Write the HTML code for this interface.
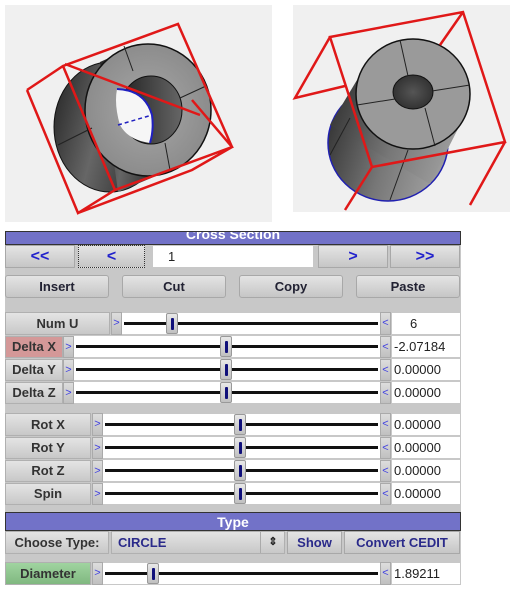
<!DOCTYPE html><html><head><style>
body{margin:0;width:515px;height:597px;background:#fff;position:relative;overflow:hidden;font-family:"Liberation Sans",Arial,sans-serif;}
.a{position:absolute;box-sizing:border-box}
.btn{position:absolute;box-sizing:border-box;background:linear-gradient(#e4e4e4,#c6c6c6);border:1px solid #a8a8a8;border-radius:3px;font-weight:bold;font-size:13px;color:#222;text-align:center}
.lbl{position:absolute;box-sizing:border-box;background:linear-gradient(#e4e4e4,#c8c8c8);border:1px solid #b0b0b0;font-weight:bold;font-size:13px;color:#333;text-align:center}
.gt{position:absolute;box-sizing:border-box;width:11px;background:linear-gradient(#ddd,#c0c0c0);border:1px solid #aaa;color:#4040e0;font-size:11px;text-align:center}
.tr{position:absolute;background:#fff}
.tr i{position:absolute;left:2px;right:2px;top:9px;height:3px;background:#111}
.th{position:absolute;width:12px;top:0;height:21px;background:linear-gradient(#e8e8e8,#c0c0c0);border:1px solid #999;border-radius:2px;box-sizing:border-box}
.th b{position:absolute;left:4px;top:4px;width:3px;height:12px;background:#10107a;border-radius:1px}
.val{position:absolute;background:#fff;font-size:13px;color:#222;padding-left:2px;box-sizing:border-box}
.bar{position:absolute;background:#7272c8;border:1px solid #333;color:#fff;font-weight:bold;font-size:14px;text-align:center;box-sizing:border-box;overflow:hidden}
</style></head><body>
<div class="a" style="left:5px;top:5px;width:267px;height:217px;background:#f0f0f0"></div>
<svg class="a" style="left:0;top:0" width="280" height="230">
<defs><linearGradient id="g1" x1="0" x2="1" y1="0" y2="0.3"><stop offset="0" stop-color="#222"/><stop offset=".5" stop-color="#666"/><stop offset="1" stop-color="#2a2a2a"/></linearGradient>
<radialGradient id="g2"><stop offset="0" stop-color="#a8a8a8"/><stop offset="1" stop-color="#8c8c8c"/></radialGradient>
<linearGradient id="gh" x1="0" x2="1"><stop offset="0" stop-color="#222"/><stop offset="1" stop-color="#666"/></linearGradient></defs>
<ellipse cx="110" cy="127" rx="56" ry="65" fill="url(#g1)" stroke="#111"/>
<polygon points="100,62 140,44 170,170 118,192" fill="url(#g1)"/>
<ellipse cx="148" cy="110" rx="63" ry="66" fill="url(#g2)" stroke="#111" stroke-width="1.5"/>
<ellipse cx="151" cy="110" rx="31" ry="34" fill="url(#gh)" stroke="#111"/>
<path d="M117 89 Q145 90 152 115 Q154 130 150 143 Q128 140 120 125 Q114 105 117 89 Z" fill="#f6f6f6"/>
<path d="M117 89 Q145 90 152 115 Q154 130 150 143" fill="none" stroke="#2020c0" stroke-width="2"/>
<path d="M118 125 L152 115" stroke="#2020c0" stroke-dasharray="4,3" stroke-width="1.5"/>
<path d="M124 46 L133 71 M165 143 L170 170 M180 98 L206 86 M58 145 L92 128" stroke="#222"/>
<path d="M27 90 L63 66 L178 24 L232 147 L115 190 L78 213 L27 90 M63 66 L115 190 M178 24 L232 147 M65 64 L200 115 M192 100 L232 147 L192 170 L78 213" fill="none" stroke="#e01818" stroke-width="2.5"/>
</svg>
<div class="a" style="left:293px;top:5px;width:217px;height:207px;background:#f0f0f0"></div>
<svg class="a" style="left:280px;top:0" width="235" height="230">
<defs><linearGradient id="g3" x1="0" x2="1" y1="0" y2="0.3"><stop offset="0" stop-color="#2a2a2a"/><stop offset=".6" stop-color="#777"/><stop offset="1" stop-color="#9a9a9a"/></linearGradient>
<radialGradient id="g4"><stop offset="0" stop-color="#555"/><stop offset="1" stop-color="#333"/></radialGradient></defs>
<ellipse cx="108" cy="143" rx="60" ry="58" fill="url(#g3)" stroke="#2020b0" stroke-width="1.5"/>
<polygon points="80,75 185,115 150,184 50,125" fill="url(#g3)"/>
<ellipse cx="133" cy="94" rx="57" ry="55" fill="#9a9a9a" stroke="#111" stroke-width="1.5"/>
<ellipse cx="133" cy="92" rx="20" ry="17" fill="url(#g4)" stroke="#111"/>
<path d="M120 40 L128 76 M145 108 L155 146 M77 105 L115 99 M152 91 L190 85 M50 155 L70 118 M110 200 L128 150" stroke="#222"/>
<path d="M50 37 L183 12 L225 142 L92 167 Z M50 37 L15 98 L65 86 M183 12 L160 45 M225 142 L190 205 M92 167 L65 210" fill="none" stroke="#e01818" stroke-width="2.5"/>
</svg>
<div class="a" style="left:5px;top:235px;width:456px;height:350px;background:#c8c8c8"></div>
<div class="bar" style="left:5px;top:231px;width:456px;height:14px;line-height:4px">Cross Section</div>
<div class="btn" style="left:5px;top:245px;width:70px;height:23px;color:#2222cc;font-size:16px;line-height:21px;border-radius:0">&lt;&lt;</div>
<div class="btn" style="left:78px;top:245px;width:67px;height:23px;color:#2222cc;font-size:16px;line-height:21px;border:1px dotted #333;border-radius:0">&lt;</div>
<div class="val" style="left:153px;top:246px;width:160px;height:21px;line-height:21px;padding-left:15px">1</div>
<div class="btn" style="left:318px;top:245px;width:70px;height:23px;color:#2222cc;font-size:16px;line-height:21px;border-radius:0">&gt;</div>
<div class="btn" style="left:390px;top:245px;width:70px;height:23px;color:#2222cc;font-size:16px;line-height:21px;border-radius:0">&gt;&gt;</div>
<div class="btn" style="left:5px;top:275px;width:104px;height:23px;line-height:21px;color:#223">Insert</div>
<div class="btn" style="left:122px;top:275px;width:104px;height:23px;line-height:21px;color:#223">Cut</div>
<div class="btn" style="left:239px;top:275px;width:104px;height:23px;line-height:21px;color:#223">Copy</div>
<div class="btn" style="left:356px;top:275px;width:104px;height:23px;line-height:21px;color:#223">Paste</div>

<div class="lbl" style="left:5px;top:312px;width:105px;height:23px;line-height:21px">Num U</div>
<div class="gt" style="left:111px;top:312px;height:23px;line-height:21px">&gt;</div>
<div class="tr" style="left:122px;top:313px;width:258px;height:21px"><i></i><div class="th" style="left:44px"><b></b></div></div>
<div class="gt" style="left:380px;top:312px;height:23px;line-height:21px">&lt;</div>
<div class="val" style="left:392px;top:313px;width:68px;height:21px;line-height:21px;padding-left:18px">6</div>

<div class="lbl" style="left:5px;top:336px;width:58px;height:22px;line-height:20px;background:#d49898">Delta X</div>
<div class="gt" style="left:63px;top:336px;height:22px;line-height:20px">&gt;</div>
<div class="tr" style="left:74px;top:336px;width:306px;height:21px"><i></i><div class="th" style="left:146px"><b></b></div></div>
<div class="gt" style="left:380px;top:336px;height:22px;line-height:20px">&lt;</div>
<div class="val" style="left:392px;top:336px;width:68px;height:21px;line-height:21px">-2.07184</div>

<div class="lbl" style="left:5px;top:359px;width:58px;height:22px;line-height:20px">Delta Y</div>
<div class="gt" style="left:63px;top:359px;height:22px;line-height:20px">&gt;</div>
<div class="tr" style="left:74px;top:359px;width:306px;height:21px"><i></i><div class="th" style="left:146px"><b></b></div></div>
<div class="gt" style="left:380px;top:359px;height:22px;line-height:20px">&lt;</div>
<div class="val" style="left:392px;top:359px;width:68px;height:21px;line-height:21px">0.00000</div>

<div class="lbl" style="left:5px;top:382px;width:58px;height:22px;line-height:20px">Delta Z</div>
<div class="gt" style="left:63px;top:382px;height:22px;line-height:20px">&gt;</div>
<div class="tr" style="left:74px;top:382px;width:306px;height:21px"><i></i><div class="th" style="left:146px"><b></b></div></div>
<div class="gt" style="left:380px;top:382px;height:22px;line-height:20px">&lt;</div>
<div class="val" style="left:392px;top:382px;width:68px;height:21px;line-height:21px">0.00000</div>

<div class="lbl" style="left:5px;top:413px;width:86px;height:23px;line-height:21px">Rot X</div>
<div class="gt" style="left:92px;top:413px;height:23px;line-height:21px">&gt;</div>
<div class="tr" style="left:103px;top:414px;width:277px;height:21px"><i></i><div class="th" style="left:131px"><b></b></div></div>
<div class="gt" style="left:380px;top:413px;height:23px;line-height:21px">&lt;</div>
<div class="val" style="left:392px;top:414px;width:68px;height:21px;line-height:21px">0.00000</div>

<div class="lbl" style="left:5px;top:437px;width:86px;height:22px;line-height:20px">Rot Y</div>
<div class="gt" style="left:92px;top:437px;height:22px;line-height:20px">&gt;</div>
<div class="tr" style="left:103px;top:437px;width:277px;height:21px"><i></i><div class="th" style="left:131px"><b></b></div></div>
<div class="gt" style="left:380px;top:437px;height:22px;line-height:20px">&lt;</div>
<div class="val" style="left:392px;top:437px;width:68px;height:21px;line-height:21px">0.00000</div>

<div class="lbl" style="left:5px;top:460px;width:86px;height:22px;line-height:20px">Rot Z</div>
<div class="gt" style="left:92px;top:460px;height:22px;line-height:20px">&gt;</div>
<div class="tr" style="left:103px;top:460px;width:277px;height:21px"><i></i><div class="th" style="left:131px"><b></b></div></div>
<div class="gt" style="left:380px;top:460px;height:22px;line-height:20px">&lt;</div>
<div class="val" style="left:392px;top:460px;width:68px;height:21px;line-height:21px">0.00000</div>

<div class="lbl" style="left:5px;top:483px;width:86px;height:22px;line-height:20px">Spin</div>
<div class="gt" style="left:92px;top:483px;height:22px;line-height:20px">&gt;</div>
<div class="tr" style="left:103px;top:483px;width:277px;height:21px"><i></i><div class="th" style="left:131px"><b></b></div></div>
<div class="gt" style="left:380px;top:483px;height:22px;line-height:20px">&lt;</div>
<div class="val" style="left:392px;top:483px;width:68px;height:21px;line-height:21px">0.00000</div>

<div class="bar" style="left:5px;top:512px;width:456px;height:19px;line-height:18px">Type</div>
<div class="lbl" style="left:5px;top:531px;width:104px;height:23px;line-height:21px">Choose Type:</div>
<div class="lbl" style="left:111px;top:531px;width:174px;height:23px;line-height:21px;text-align:left;padding-left:6px;color:#2a2a8a;font-weight:bold">CIRCLE<span style="position:absolute;left:148px;top:0;width:24px;border-left:1px solid #aaa;text-align:center;color:#222;font-size:11px">&#8661;</span></div>
<div class="btn" style="left:287px;top:531px;width:55px;height:23px;line-height:21px;color:#2a2a8a;border-radius:0">Show</div>
<div class="btn" style="left:344px;top:531px;width:116px;height:23px;line-height:21px;color:#2a2a8a;border-radius:0">Convert CEDIT</div>

<div class="lbl" style="left:5px;top:562px;width:86px;height:23px;line-height:21px;background:linear-gradient(#a0d4a0,#80b880)">Diameter</div>
<div class="gt" style="left:92px;top:562px;height:23px;line-height:21px">&gt;</div>
<div class="tr" style="left:103px;top:563px;width:277px;height:21px"><i></i><div class="th" style="left:44px"><b></b></div></div>
<div class="gt" style="left:380px;top:562px;height:23px;line-height:21px">&lt;</div>
<div class="val" style="left:392px;top:563px;width:68px;height:21px;line-height:21px">1.89211</div>
</body></html>
